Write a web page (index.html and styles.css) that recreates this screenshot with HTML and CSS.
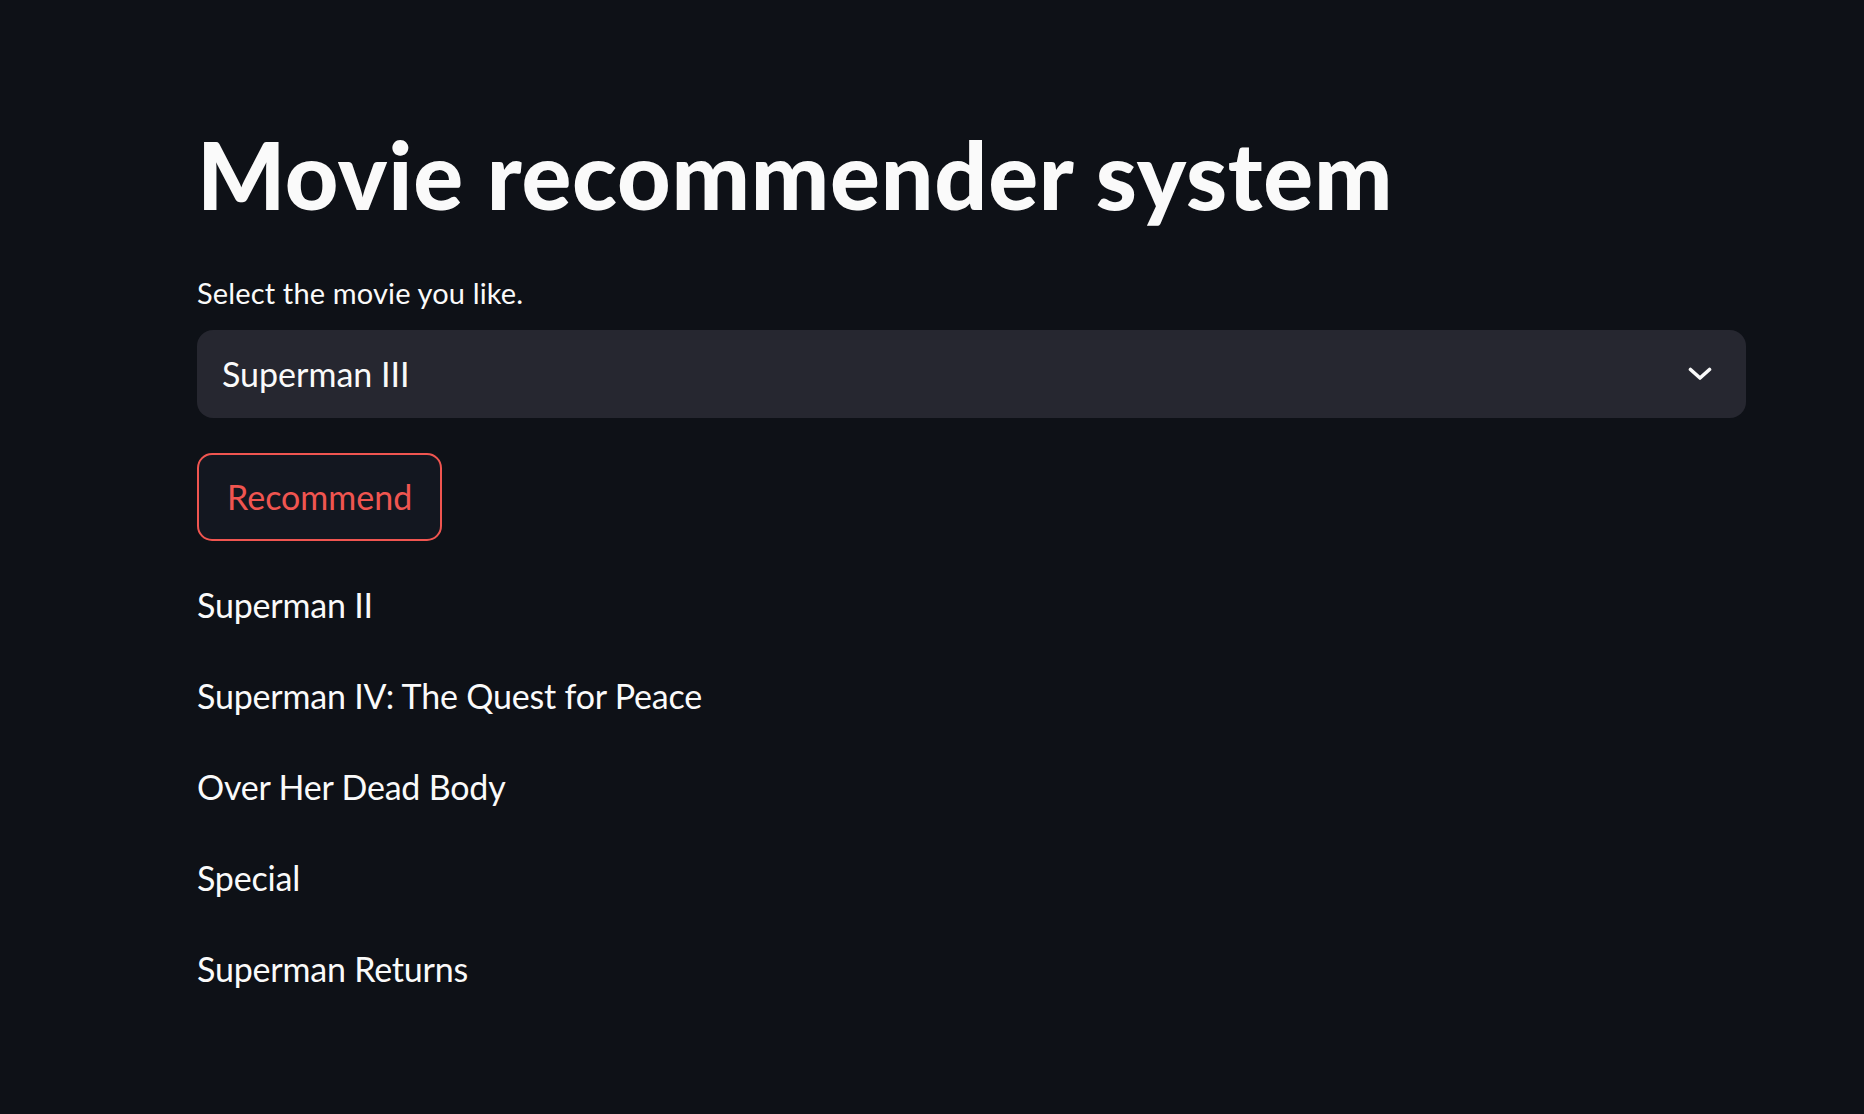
FILE: index.html
```html
<!DOCTYPE html>
<html lang="en">
<head>
<meta charset="utf-8">
<title>Movie recommender system</title>
<link rel="stylesheet" href="styles.css">
</head>
<body>
<main class="app">
  <h1 class="title">Movie recommender system</h1>
  <label class="label">Select the movie you like.</label>
  <div class="select">
    <span class="select-value">Superman III</span>
    <svg class="chevron" width="24" height="14" viewBox="0 0 24 14"><polyline points="2.5,2.5 12,11 21.5,2.5" fill="none" stroke="#fafafa" stroke-width="3.6" stroke-linecap="round" stroke-linejoin="round"/></svg>
  </div>
  <button class="btn">Recommend</button>
  <ul class="results">
    <li>Superman II</li>
    <li>Superman IV: The Quest for Peace</li>
    <li>Over Her Dead Body</li>
    <li>Special</li>
    <li>Superman Returns</li>
  </ul>
</main>
</body>
</html>
```

FILE: styles.css
```css
html, body {
  margin: 0;
  padding: 0;
  background: #0e1117;
  color: #fafafa;
  font-family: Lato, "Liberation Sans", sans-serif;
}
.app {
  padding: 119px 0 0 197px;
  width: 1549px;
  display: flex;
  flex-direction: column;
  align-items: flex-start;
}
.title {
  margin: 0;
  font-size: 93px;
  line-height: 110px;
  font-weight: 900;
  letter-spacing: 0.8px;
}
.label {
  margin-top: 44px;
  font-size: 29px;
  line-height: 40px;
  letter-spacing: 0.15px;
}
.select {
  margin-top: 17px;
  width: 1549px;
  height: 88px;
  box-sizing: border-box;
  background: #262730;
  border-radius: 16px;
  display: flex;
  align-items: center;
  justify-content: space-between;
  padding: 0 34px 0 25px;
}
.select-value {
  font-size: 34px;
  line-height: 88px;
}
.chevron {
  display: block;
}
.btn {
  margin-top: 35px;
  height: 88px;
  box-sizing: border-box;
  background: #131720;
  border: 2px solid #f05550;
  border-radius: 15px;
  color: #f05550;
  font-family: inherit;
  font-size: 34px;
  line-height: 84px;
  padding: 0 28px;
}
.results {
  list-style: none;
  margin: 44px 0 0 0;
  padding: 0;
  display: flex;
  flex-direction: column;
  gap: 51px;
}
.results li {
  font-size: 34px;
  line-height: 40px;
  letter-spacing: -0.2px;
}
```
